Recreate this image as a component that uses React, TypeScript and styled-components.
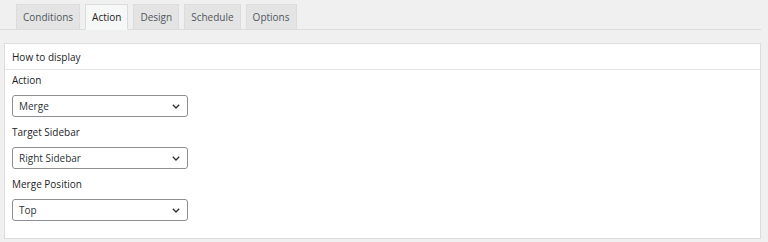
import React from "react";
import styled, { createGlobalStyle } from "styled-components";

const Global = createGlobalStyle`
  html, body { margin: 0; padding: 0; background: #f0f0f1; }
  body { font-family: "Open Sans", "Noto Sans", sans-serif; color: #1d2327; }
`;

const Page = styled.div`
  width: 768px;
  height: 242px;
  box-sizing: border-box;
  padding: 4px 7px 0 0;
  display: flex;
  flex-direction: column;
`;

const Tabs = styled.nav`
  display: flex;
  align-items: flex-end;
  gap: 5px;
  padding-left: 16px;
  border-bottom: 1px solid #dcdcde;
  height: 26px;
  box-sizing: border-box;
`;

const Tab = styled.div<{ $active?: boolean }>`
  box-sizing: border-box;
  height: ${(p) => (p.$active ? "26px" : "25px")};
  margin-bottom: ${(p) => (p.$active ? "-1px" : "0")};
  padding: 0 6px;
  display: flex;
  align-items: center;
  font-size: 10px;
  color: ${(p) => (p.$active ? "#1d2327" : "#50575e")};
  background: ${(p) => (p.$active ? "#f6f7f7" : "#e4e4e4")};
  border: 1px solid #dcdcde;
  border-bottom: ${(p) => (p.$active ? "1px solid #f6f7f7" : "none")};
`;

const Panel = styled.section`
  margin: 13px 0 0 4px;
  background: #fff;
  border: 1px solid #dcdcde;
  height: 196px;
  box-sizing: border-box;
`;

const PanelHeader = styled.h2`
  margin: 0;
  height: 26px;
  box-sizing: border-box;
  padding: 0 7px;
  display: flex;
  align-items: center;
  font-size: 10px;
  font-weight: 400;
  border-bottom: 1px solid #e5e5e5;
`;

const Body = styled.div`
  padding: 3px 7px 0;
  display: flex;
  flex-direction: column;
`;

const Field = styled.div`
  display: flex;
  flex-direction: column;
  gap: 8px;
  margin-bottom: 8px;
`;

const Label = styled.label`
  font-size: 10px;
  line-height: 14px;
  color: #1d2327;
`;

const SelectBox = styled.div`
  width: 176px;
  height: 22px;
  box-sizing: border-box;
  border: 1px solid #8c8f94;
  border-radius: 3px;
  background: #fff;
  display: flex;
  align-items: center;
  justify-content: space-between;
  padding: 0 7px 0 6px;
  font-size: 10px;
  color: #2c3338;
`;

const Chevron = () => (
  <svg width="8" height="5" viewBox="0 0 8 5" fill="none">
    <path d="M0.8 0.8l3.2 3.2 3.2-3.2" stroke="#2c3338" strokeWidth="1.3" />
  </svg>
);

const fields = [
  { label: "Action", value: "Merge" },
  { label: "Target Sidebar", value: "Right Sidebar" },
  { label: "Merge Position", value: "Top" },
];

export default function App() {
  return (
    <>
      <Global />
      <Page>
        <Tabs>
          <Tab>Conditions</Tab>
          <Tab $active>Action</Tab>
          <Tab>Design</Tab>
          <Tab>Schedule</Tab>
          <Tab>Options</Tab>
        </Tabs>
        <Panel>
          <PanelHeader>How to display</PanelHeader>
          <Body>
            {fields.map((f) => (
              <Field key={f.label}>
                <Label>{f.label}</Label>
                <SelectBox>
                  <span>{f.value}</span>
                  <Chevron />
                </SelectBox>
              </Field>
            ))}
          </Body>
        </Panel>
      </Page>
    </>
  );
}
